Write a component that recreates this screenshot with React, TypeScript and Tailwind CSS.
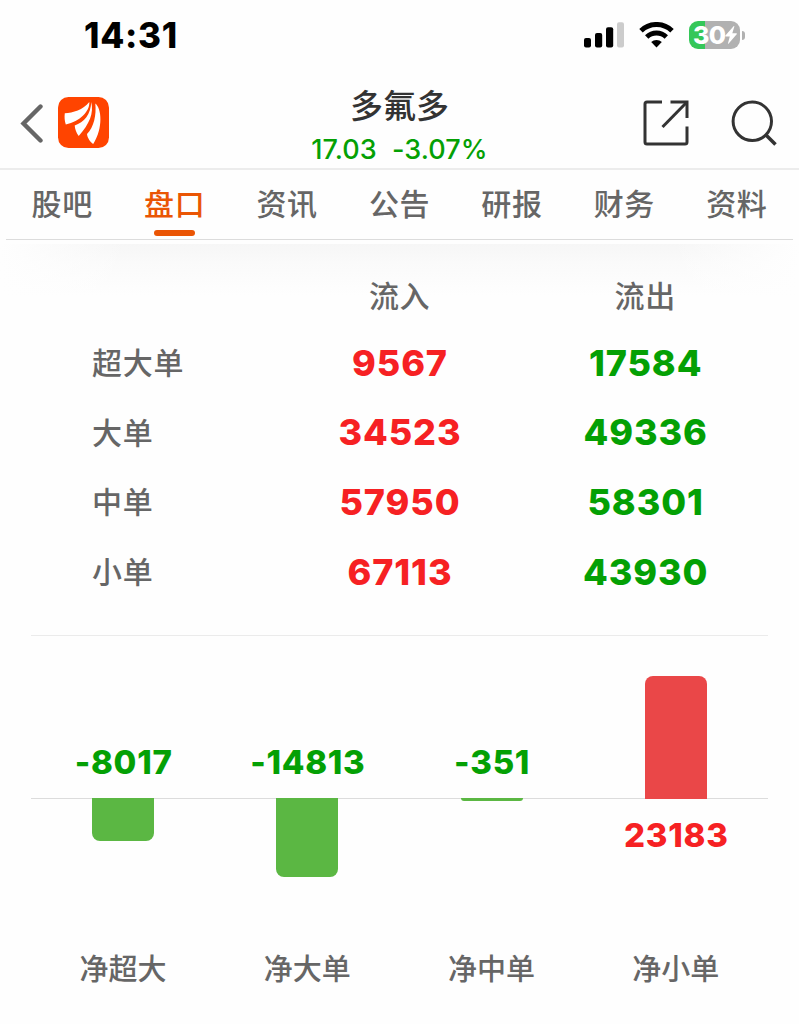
import React from 'react';

const tabs = ['股吧', '盘口', '资讯', '公告', '研报', '财务', '资料'];

const orders = [
  { label: '超大单', inflow: 9567, outflow: 17584 },
  { label: '大单', inflow: 34523, outflow: 49336 },
  { label: '中单', inflow: 57950, outflow: 58301 },
  { label: '小单', inflow: 67113, outflow: 43930 },
];

const netFlows = [
  { label: '净超大', value: -8017 },
  { label: '净大单', value: -14813 },
  { label: '净中单', value: -351 },
  { label: '净小单', value: 23183 },
];

// px per unit
const barScale = 123 / 23183;

const StatusBar: React.FC = () => (
  <div className="flex h-[70px] items-center justify-between pl-[84px] pr-[54px]">
    <span className="text-[35px] leading-[70px] font-extrabold tracking-[0.7px] text-black">14:31</span>
    <div className="flex items-center">
      {/* Signal */}
      <svg width="40" height="26" viewBox="0 0 40 26" className="mr-[15px]">
        <rect x="0" y="16" width="7" height="9.5" rx="2" fill="#000" />
        <rect x="11" y="11" width="7.2" height="14.5" rx="2" fill="#000" />
        <rect x="22" y="5.3" width="7.2" height="20.2" rx="2" fill="#000" />
        <rect x="33" y="0.3" width="7" height="25.2" rx="2" fill="#ccc" />
      </svg>
      {/* Wifi */}
      <svg width="35" height="26" viewBox="0 0 35 26" className="mr-[15px]">
        <path d="M2 8.7a22.4 22.4 0 0 1 31 0" fill="none" stroke="#000" strokeWidth="5" />
        <path d="M7.7 15a14 14 0 0 1 19.6 0" fill="none" stroke="#000" strokeWidth="4.8" />
        <path d="M17.5 25.4l-5.3-5.3a7.6 7.6 0 0 1 10.6 0z" fill="#000" />
      </svg>
      {/* Battery */}
      <div className="flex h-7 w-[51px] items-center rounded-[9px] bg-[linear-gradient(to_right,#35c759_16px,#b1b1b1_16px)] pl-1">
        <span className="text-[25px] leading-7 font-extrabold tracking-[-0.7px] text-white">30</span>
        <svg width="12" height="18" viewBox="0 0 12 18" className="shrink-0">
          <path d="M8.6 0.3L0.4 9.6c-.4.5-.2 1 .4 1h4L3 17.2c-.1.6.3.8.7.4l8-9.4c.4-.5.2-1-.4-1h-4l2-6.5c.1-.6-.3-.8-.7-.4z" fill="#fff" />
        </svg>
      </div>
      <div className="ml-[2px] h-[9px] w-[3px] rounded-r-full bg-[#b1b1b1]" />
    </div>
  </div>
);

const Header: React.FC = () => (
  <header className="grid h-[100px] grid-cols-[1fr_auto_1fr] border-b-2 border-[#ececec]">
    <div className="flex items-center pl-5 pt-[5px]">
      <svg width="24" height="40" viewBox="0 0 24 40" className="mr-[14px]">
        <path d="M20.5 3.5L3.5 20.5l17 17" fill="none" stroke="#666" strokeWidth="4.4" strokeLinecap="round" />
      </svg>
      <svg width="51" height="51" viewBox="0 0 51 51">
        <rect width="51" height="51" rx="10.5" fill="#ff4400" />
        <path d="M6.8 16.2C15 15.8 25 13 31.3 5C32 14 22 24.500 7.8 27.5C6.6 24 6.3 20 6.8 16.2z" fill="#fff" />
        <path d="M33.2 5C36 16 31.500 27 20.7 39C18.2 35.5 17 32 16.7 28.5C26 25.500 33 17 33.2 5z" fill="#fff" />
        <path d="M37.3 6.5C43.500 11 45.500 31 35.2 47C32.5 45 29.500 41.5 29 37C36 30 38.500 18 37.3 6.5z" fill="#fff" />
      </svg>
    </div>
    <div className="flex flex-col items-center">
      <h1 className="mt-[14px] text-[33px] leading-[44px] font-medium text-[#333]">多氟多</h1>
      <p className="mt-px flex gap-[15px] text-[27px] leading-[41px] font-medium tracking-[0.1px] text-[#04a004]">
        <span>17.03</span>
        <span>-3.07%</span>
      </p>
    </div>
    <div className="flex items-center justify-end gap-[42px] pr-[22px] pt-[6px]">
      <svg width="46" height="46" viewBox="0 0 46 46" fill="none" stroke="#333" strokeWidth="3">
        <path d="M19 2H4Q2 2 2 4V42Q2 44 4 44H42Q44 44 44 42V26.5" />
        <path d="M27.5 2H44V18" />
        <path d="M44 2L19.5 27" />
      </svg>
      <svg width="46" height="46" viewBox="0 0 46 46" fill="none" stroke="#333" strokeWidth="3">
        <circle cx="21.3" cy="21.3" r="19.2" />
        <path d="M34.5 34.5L44.5 44.5" strokeWidth="3.6" />
      </svg>
    </div>
  </header>
);

export default function App() {
  return (
    <div className="h-[1024px] w-[799px] overflow-hidden bg-[#fefefe] font-['Inter','Noto_Sans_CJK_SC',sans-serif] text-[#666]">
      <StatusBar />
      <Header />

      <nav className="mx-1.5 grid h-[70px] grid-cols-7 border-b border-[#dcdcdc]">
        {tabs.map((tab) => (
          <div
            key={tab}
            className={
              tab === '盘口'
                ? 'flex flex-col items-center text-[#ea5504]'
                : 'flex flex-col items-center'
            }
          >
            <span className="mt-[9px] mb-px text-[30px] leading-[50px] font-medium tracking-[0.6px]">{tab}</span>
            {tab === '盘口' && <i className="h-1.5 w-[41px] rounded-full bg-[#ea5504]" />}
          </div>
        ))}
      </nav>

      {/* soft shade that fades out below the tabs */}
      <div className="mt-1 h-[52px] bg-[linear-gradient(to_right,#fefefe_0%,transparent_16%,transparent_84%,#fefefe_100%),linear-gradient(to_bottom,#f6f6f6_0%,#fafafa_35%,#fefefe_100%)]" />

      <main className="mx-[31px] -mt-[35px]">
        <div className="grid h-[68px] grid-cols-3 items-center pt-[2px] text-center text-[30px] font-medium tracking-[0.6px]">
          <span className="col-start-2">流入</span>
          <span>流出</span>
        </div>
        {orders.map((row) => (
          <div key={row.label} className="grid h-[69.6px] grid-cols-3 items-center text-center text-[36px] font-extrabold tracking-[0.9px]">
            <span className="pl-[61px] text-left text-[30px] font-medium tracking-[0.8px]">{row.label}</span>
            <span className="pb-[2px] pl-px text-[#f62123]">{row.inflow}</span>
            <span className="pb-[2px] pl-px text-[#04a004]">{row.outflow}</span>
          </div>
        ))}

        <section className="mt-[28px] border-t border-[#ebebeb]">
          <div className="grid grid-cols-4">
            {netFlows.map((item) => {
              const height = Math.max(Math.abs(item.value) * barScale, 3);
              const up = item.value > 0;
              return (
                <div key={item.label} className="flex flex-col items-center">
                  <div className="flex h-[163px] w-full flex-col items-center justify-end border-b border-[#dcdcdc]">
                    {up ? (
                      <div className="-mb-px w-[62px] rounded-t-lg bg-[#ea4748]" style={{ height }} />
                    ) : (
                      <span className="mb-[12px] pl-px text-[33px] leading-[48px] font-extrabold tracking-[0.7px] text-[#04a004]">{item.value}</span>
                    )}
                  </div>
                  <div className="-mt-px h-[146px]">
                    {up ? (
                      <span className="mt-[13px] block pl-px text-[33px] leading-[48px] font-extrabold tracking-[0.8px] text-[#f62123]">{item.value}</span>
                    ) : (
                      <div className="w-[62px] rounded-b-lg bg-[#5bb743]" style={{ height }} />
                    )}
                  </div>
                  <span className="mt-px text-[29px] leading-[50px] font-medium">{item.label}</span>
                </div>
              );
            })}
          </div>
        </section>
      </main>
    </div>
  );
}
